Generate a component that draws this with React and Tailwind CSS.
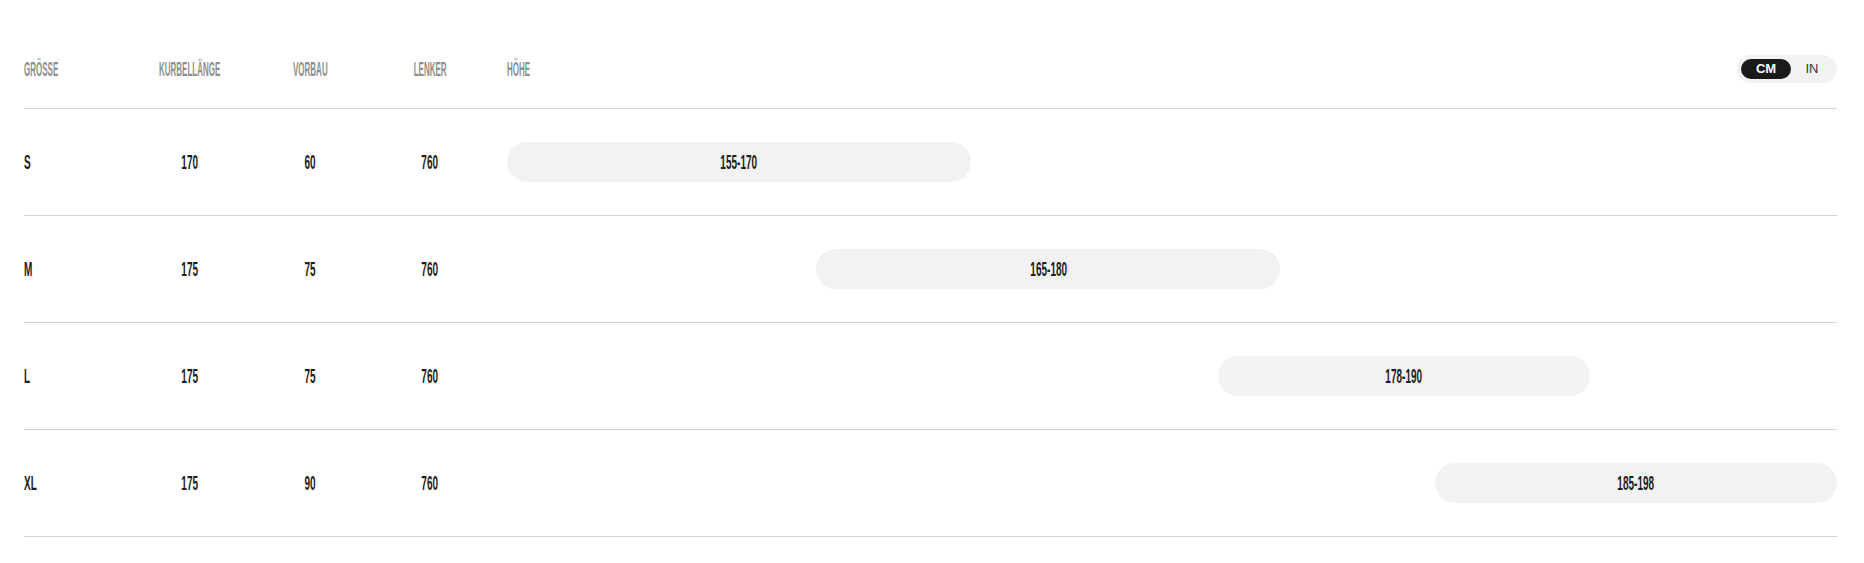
import { useState } from 'react';

const sizes = [
  { size: 'S', crank: 170, stem: 60, bar: 760, min: 155, max: 170 },
  { size: 'M', crank: 175, stem: 75, bar: 760, min: 165, max: 180 },
  { size: 'L', crank: 175, stem: 75, bar: 760, min: 178, max: 190 },
  { size: 'XL', crank: 175, stem: 90, bar: 760, min: 185, max: 198 },
];

// scale for the height bars
const RANGE_MIN = 155;
const RANGE_MAX = 198;

function Head({ children, center }) {
  return (
    <div className={center ? 'flex justify-center' : 'flex'}>
      <span
        className={`inline-block font-['Liberation_Sans',Arial,sans-serif] text-[20px] font-bold leading-none text-[#8e8e8e] scale-x-[0.4] ${center ? 'origin-center' : 'origin-left'}`}
      >
        {children}
      </span>
    </div>
  );
}

function Cell({ children, center }) {
  return (
    <div className={center ? 'flex justify-center' : 'flex'}>
      <span
        className={`inline-block font-['Liberation_Sans',Arial,sans-serif] text-[20px] font-bold leading-none text-[#1c1c1c] scale-x-[0.5] ${center ? 'origin-center' : 'origin-left'}`}
      >
        {children}
      </span>
    </div>
  );
}

function UnitToggle() {
  const [unit, setUnit] = useState('cm');
  return (
    <div className="flex h-[28px] w-[100px] items-center rounded-full bg-[#f2f2f2] p-[4px] font-['Liberation_Sans',Arial,sans-serif] text-[13px]">
      <button
        onClick={() => setUnit('cm')}
        className={`h-[20px] w-[50px] rounded-full leading-[20px] ${unit === 'cm' ? 'bg-[#1a1a1a] font-bold text-white' : 'text-[#333]'}`}
      >
        CM
      </button>
      <button
        onClick={() => setUnit('in')}
        className={`h-[20px] flex-1 rounded-full leading-[20px] ${unit === 'in' ? 'bg-[#1a1a1a] font-bold text-white' : 'text-[#333]'}`}
      >
        IN
      </button>
    </div>
  );
}

export default function App() {
  const span = RANGE_MAX - RANGE_MIN;

  return (
    <div className="min-h-screen bg-white pl-[24px] pr-[27px] pt-[55px]">
      {/* header */}
      <div className="flex h-[54px] items-start border-b border-[#d2d2d2]">
        <div className="grid h-[28px] flex-1 grid-cols-[106px_120px_120px_120px_1fr] items-center">
          <Head>GRÖSSE</Head>
          <Head center>KURBELLÄNGE</Head>
          <Head center>VORBAU</Head>
          <Head center>LENKER</Head>
          <div className="pl-[17px]">
            <Head>HÖHE</Head>
          </div>
        </div>
        <UnitToggle />
      </div>

      {/* rows */}
      {sizes.map(row => {
        const left = ((row.min - RANGE_MIN) / span) * 100;
        const width = ((row.max - row.min) / span) * 100;
        return (
          <div
            key={row.size}
            className="grid h-[107px] grid-cols-[106px_120px_120px_120px_1fr] items-center border-b border-[#d2d2d2]"
          >
            <Cell>{row.size}</Cell>
            <Cell center>{row.crank}</Cell>
            <Cell center>{row.stem}</Cell>
            <Cell center>{row.bar}</Cell>
            <div className="pl-[17px]">
              <div
                className="flex h-[40px] items-center justify-center rounded-full bg-[#f2f2f2]"
                style={{ marginLeft: `${left}%`, width: `${width}%` }}
              >
                <Cell center>{row.min}-{row.max}</Cell>
              </div>
            </div>
          </div>
        );
      })}
    </div>
  );
}
